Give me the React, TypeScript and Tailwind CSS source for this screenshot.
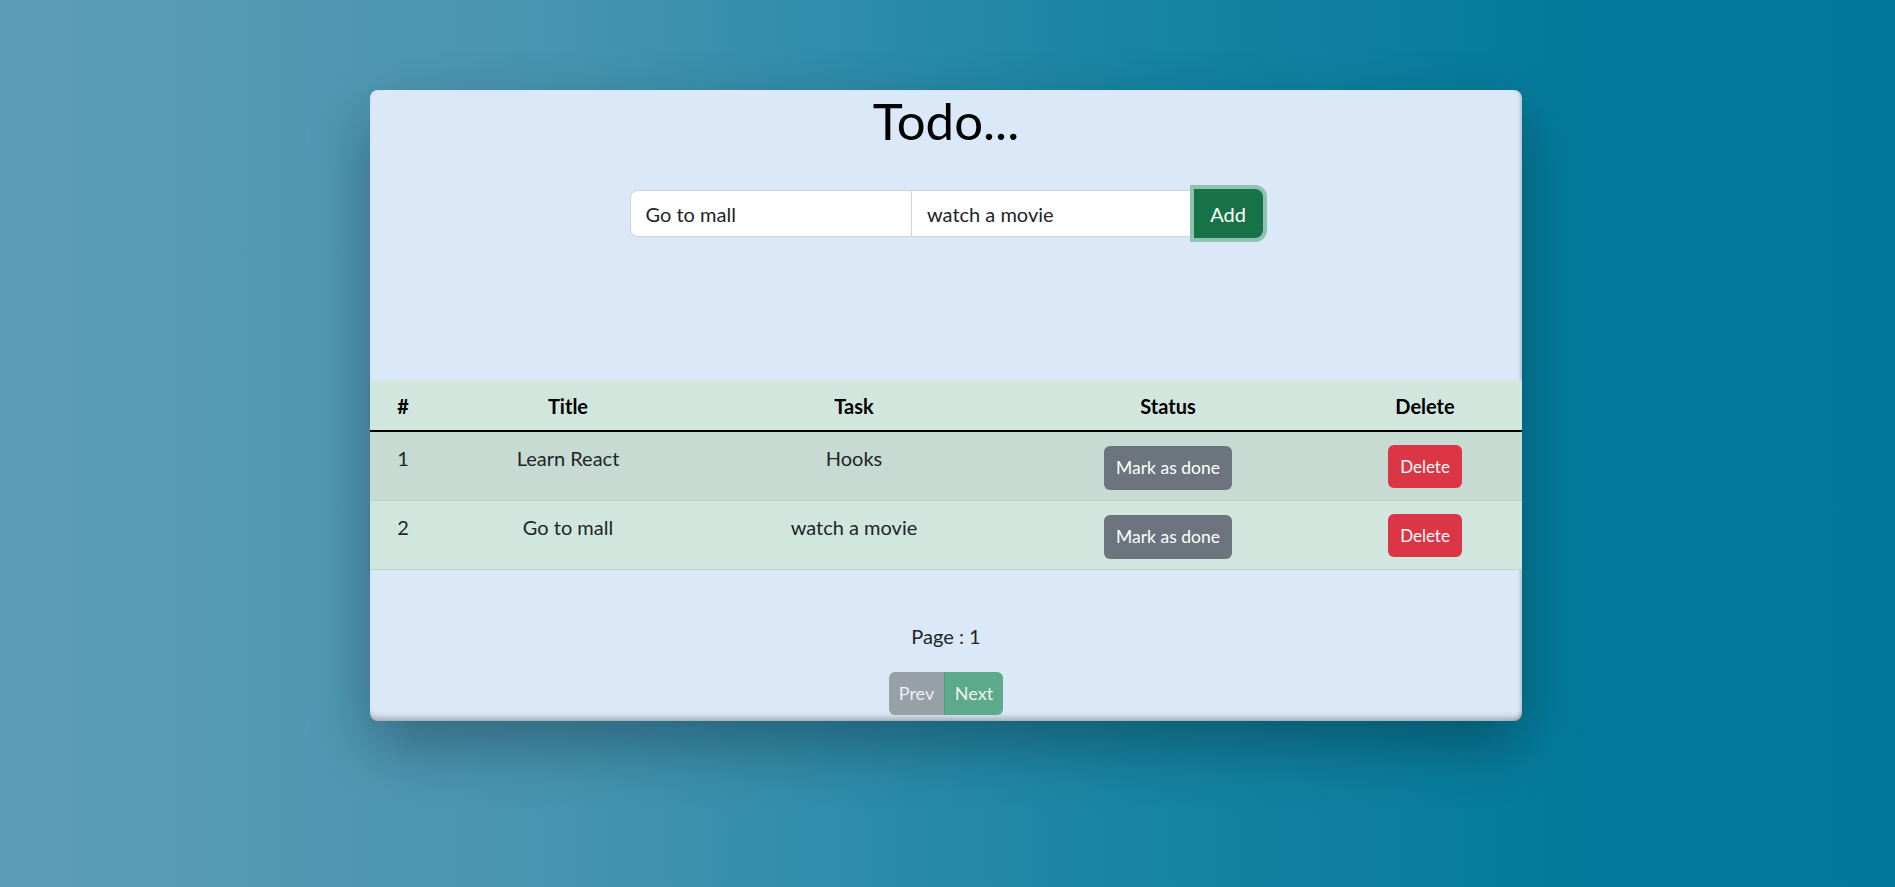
import { useState } from 'react'

type Todo = { id: number; title: string; task: string }

const initial: Todo[] = [
  { id: 1, title: 'Learn React', task: 'Hooks' },
  { id: 2, title: 'Go to mall', task: 'watch a movie' },
]

export default function App() {
  const [todos, setTodos] = useState<Todo[]>(initial)
  const [title, setTitle] = useState('Go to mall')
  const [task, setTask] = useState('watch a movie')

  function handleAdd(e: React.FormEvent) {
    e.preventDefault()
    if (!title.trim()) return
    setTodos([...todos, { id: todos.length + 1, title, task }])
  }

  return (
    <div className="min-h-screen w-full flex justify-center pt-[90px] pr-[3px] bg-[linear-gradient(90deg,#5f9db7_0%,#4594b1_30%,#1784a3_60%,#02799a_85%,#01789a_100%)] font-['Lato','Noto_Sans',sans-serif]">
      <div className="w-[1152px] h-[631px] rounded-lg bg-[#dae8f7] overflow-hidden flex flex-col shadow-[inset_0_-7px_6px_-4px_rgba(0,0,0,0.28),inset_-4px_0_4px_-3px_rgba(0,0,0,0.2),0_25px_60px_rgba(0,0,0,0.3)]">
        <h1 className="text-center text-[51px] leading-[1.2] font-normal text-black">Todo...</h1>

        <form onSubmit={handleAdd} className="mx-auto mt-[38px] flex items-center w-[633px] h-[49px]">
          <input
            value={title}
            onChange={e => setTitle(e.target.value)}
            className="flex-1 min-w-0 h-[47px] bg-white border border-[#ced4da] rounded-l-lg px-[15px] text-[20px] text-[#212529] outline-none"
          />
          <input
            value={task}
            onChange={e => setTask(e.target.value)}
            className="flex-1 min-w-0 h-[47px] bg-white border border-l-0 border-[#ced4da] px-[15px] text-[20px] text-[#212529] outline-none"
          />
          <button
            type="submit"
            className="h-[49px] w-[69px] shrink-0 rounded-r-lg bg-[#177347] text-white text-[20px] shadow-[0_0_0_4px_#8dc3b0]"
          >
            Add
          </button>
        </form>

        <table className="mt-[142px] w-full table-fixed border-separate border-spacing-0 text-black">
          <colgroup>
            <col className="w-[66px]" />
            <col className="w-[264px]" />
            <col className="w-[308px]" />
            <col className="w-[320px]" />
            <col className="w-[194px]" />
          </colgroup>
          <thead>
            <tr className="bg-[#d1e7dd]">
              {['#', 'Title', 'Task', 'Status', 'Delete'].map(h => (
                <th key={h} className="h-[52px] p-0 pt-[2px] border-b-2 border-black text-center align-middle text-[20px] leading-[30px] font-bold">{h}</th>
              ))}
            </tr>
          </thead>
          <tbody>
            {todos.map((t, i) => {
              const cell = 'p-0 align-top border-b border-[#bdd1c8]'
              return (
                <tr key={t.id} className={i % 2 === 0 ? 'bg-[#c7dbd2]' : 'bg-[#d1e7dd]'}>
                  <td className={`${cell} h-[69px] pt-[11px] text-center text-[20px] leading-[30px] text-[#212529]`}>{i + 1}</td>
                  <td className={`${cell} pt-[11px] text-center text-[20px] leading-[30px] text-[#212529]`}>{t.title}</td>
                  <td className={`${cell} pt-[11px] text-center text-[20px] leading-[30px] text-[#212529]`}>{t.task}</td>
                  <td className={`${cell} pt-[14px]`}>
                    <div className="flex justify-center">
                      <button className="h-[44px] px-[12px] rounded-md bg-[#6c757d] text-white text-[17.5px] leading-none">Mark as done</button>
                    </div>
                  </td>
                  <td className={`${cell} pt-[13px]`}>
                    <div className="flex justify-center">
                      <button
                        onClick={() => setTodos(todos.filter(x => x.id !== t.id))}
                        className="h-[43px] px-[12px] rounded-md bg-[#dc3545] text-white text-[17px] leading-none"
                      >
                        Delete
                      </button>
                    </div>
                  </td>
                </tr>
              )
            })}
          </tbody>
        </table>

        <p className="mt-[51px] text-center text-[20px] leading-[30px] text-[#212529]">Page : 1</p>

        <div className="mt-[21px] flex justify-center">
          <button disabled className="h-[43px] w-[55px] rounded-l-md bg-[#979fa7] text-[#eef0f2] text-[18px]">Prev</button>
          <button disabled className="h-[43px] w-[59px] rounded-r-md border-l border-[#4f9d80] bg-[#5ca98c] text-[#eef5f1] text-[18px]">Next</button>
        </div>
      </div>
    </div>
  )
}
